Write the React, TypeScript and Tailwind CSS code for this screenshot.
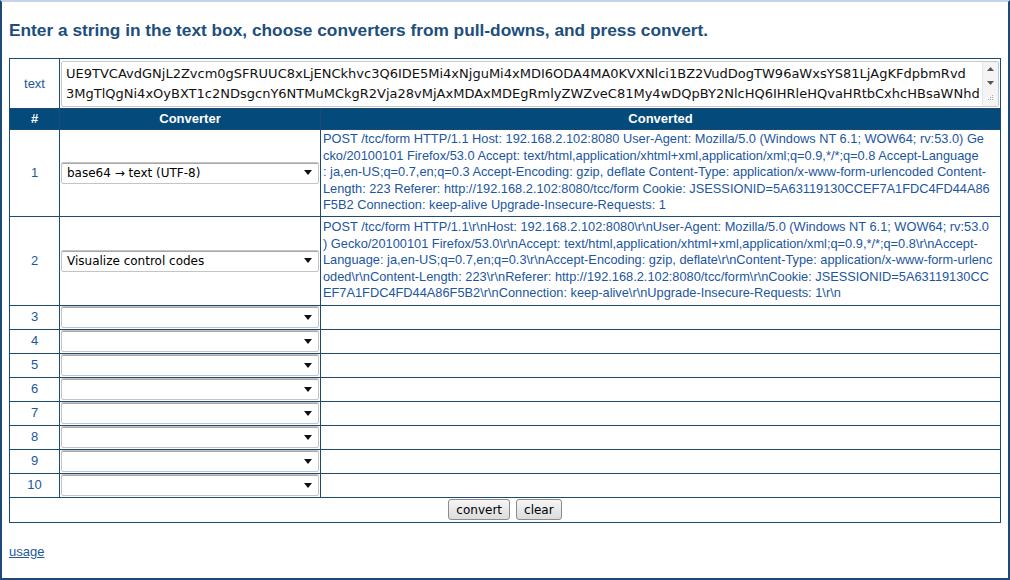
import React from "react";

const row1 = [
  "POST /tcc/form HTTP/1.1 Host: 192.168.2.102:8080 User-Agent: Mozilla/5.0 (Windows NT 6.1; WOW64; rv:53.0) Ge",
  "cko/20100101 Firefox/53.0 Accept: text/html,application/xhtml+xml,application/xml;q=0.9,*/*;q=0.8 Accept-Language",
  ": ja,en-US;q=0.7,en;q=0.3 Accept-Encoding: gzip, deflate Content-Type: application/x-www-form-urlencoded Content-",
  "Length: 223 Referer: http://192.168.2.102:8080/tcc/form Cookie: JSESSIONID=5A63119130CCEF7A1FDC4FD44A86",
  "F5B2 Connection: keep-alive Upgrade-Insecure-Requests: 1",
];

const row2 = [
  "POST /tcc/form HTTP/1.1\\r\\nHost: 192.168.2.102:8080\\r\\nUser-Agent: Mozilla/5.0 (Windows NT 6.1; WOW64; rv:53.0",
  ") Gecko/20100101 Firefox/53.0\\r\\nAccept: text/html,application/xhtml+xml,application/xml;q=0.9,*/*;q=0.8\\r\\nAccept-",
  "Language: ja,en-US;q=0.7,en;q=0.3\\r\\nAccept-Encoding: gzip, deflate\\r\\nContent-Type: application/x-www-form-urlenc",
  "oded\\r\\nContent-Length: 223\\r\\nReferer: http://192.168.2.102:8080/tcc/form\\r\\nCookie: JSESSIONID=5A63119130CC",
  "EF7A1FDC4FD44A86F5B2\\r\\nConnection: keep-alive\\r\\nUpgrade-Insecure-Requests: 1\\r\\n",
];

const Arrow = () => (
  <svg width="8" height="5" viewBox="0 0 8 5" className="shrink-0">
    <path d="M0 0h8L4 5z" fill="#111" />
  </svg>
);

const Select = ({ value }: { value?: string }) => (
  <div className="flex items-center justify-between h-[22px] mx-[1px] px-[5px] pr-[6px] bg-white border border-[#c4c4c4] rounded-[2px] text-[12px] text-black font-['DejaVu_Sans',sans-serif] shadow-[inset_0_1px_0_#a8a8a8]">
    <span className="whitespace-nowrap">{value ?? ""}</span>
    <Arrow />
  </div>
);

const Btn = ({ label }: { label: string }) => (
  <button className="h-[21px] px-[7px] text-[12px] text-black font-['DejaVu_Sans',sans-serif] border border-[#8c8c8c] rounded-[3px] bg-gradient-to-b from-[#f6f6f6] to-[#dcdcdc]">
    {label}
  </button>
);

const Lines = ({ lines }: { lines: string[] }) => (
  <>
    {lines.map((l, i) => (
      <div key={i} className="whitespace-nowrap">
        {l}
      </div>
    ))}
  </>
);

const cell = "border border-[#1b4a72]";

export default function App() {
  const empty = [3, 4, 5, 6, 7, 8, 9, 10];
  return (
    <div className="w-[1010px] h-[580px] bg-white border-2 border-[#1b4a78] border-t-[#c3d3ea] pl-[7px] font-['Liberation_Sans',Arial,sans-serif] overflow-hidden">
      <h1 className="mt-[18px] text-[17.3px] font-bold text-[#1c4e7e] leading-[20px]">
        Enter a string in the text box, choose converters from pull-downs, and press convert.
      </h1>
      <table className="mt-[18px] w-[992px] border-collapse table-fixed">
        <colgroup>
          <col className="w-[50px]" />
          <col className="w-[261px]" />
          <col />
        </colgroup>
        <tbody>
          <tr className="h-[50px]">
            <td className={`${cell} text-center text-[13px] text-[#1c56a0]`}>text</td>
            <td colSpan={2} className={`${cell} p-0`}>
              <div className="flex h-[46px] mx-[1px] my-[1px] border border-[#c8c8c8] rounded-[2px] bg-white">
                <div className="flex-1 px-[4px] pt-[2px] text-[13px] leading-[20px] text-[#111] font-['DejaVu_Sans',sans-serif] overflow-hidden whitespace-nowrap">
                  <div>UE9TVCAvdGNjL2Zvcm0gSFRUUC8xLjENCkhvc3Q6IDE5Mi4xNjguMi4xMDI6ODA4MA0KVXNlci1BZ2VudDogTW96aWxsYS81LjAgKFdpbmRvd</div>
                  <div>3MgTlQgNi4xOyBXT1c2NDsgcnY6NTMuMCkgR2Vja28vMjAxMDAxMDEgRmlyZWZveC81My4wDQpBY2NlcHQ6IHRleHQvaHRtbCxhcHBsaWNhd</div>
                </div>
                <div className="w-[16px] flex flex-col items-center justify-between py-[5px] bg-[#f4f4f4] border-l border-[#e6e6e6]">
                  <svg width="7" height="4" viewBox="0 0 7 4"><path d="M0 4h7L3.5 0z" fill="#555" /></svg>
                  <svg width="7" height="4" viewBox="0 0 7 4"><path d="M0 0h7L3.5 4z" fill="#555" /></svg>
                  <svg width="6" height="6" viewBox="0 0 6 6">
                    <g fill="#aaa">
                      <rect x="4" y="0" width="1" height="1" />
                      <rect x="2" y="2" width="1" height="1" />
                      <rect x="4" y="2" width="1" height="1" />
                      <rect x="0" y="4" width="1" height="1" />
                      <rect x="2" y="4" width="1" height="1" />
                      <rect x="4" y="4" width="1" height="1" />
                    </g>
                  </svg>
                </div>
              </div>
            </td>
          </tr>
          <tr className="h-[18px] bg-[#044a7a] text-white text-[13px] font-bold">
            <th className={cell}>#</th>
            <th className={cell}>Converter</th>
            <th className={cell}>Converted</th>
          </tr>
          <tr className="h-[87px]">
            <td className={`${cell} text-center text-[13px] text-[#1c56a0]`}>1</td>
            <td className={`${cell} p-0`}>
              <Select value="base64 → text (UTF-8)" />
            </td>
            <td className={`${cell} px-[2px] text-[12.8px] leading-[16.5px] text-[#1c56a0]`}>
              <Lines lines={row1} />
            </td>
          </tr>
          <tr className="h-[89px]">
            <td className={`${cell} text-center text-[13px] text-[#1c56a0]`}>2</td>
            <td className={`${cell} p-0`}>
              <Select value="Visualize control codes" />
            </td>
            <td className={`${cell} px-[2px] text-[12.8px] leading-[16.5px] text-[#1c56a0]`}>
              <Lines lines={row2} />
            </td>
          </tr>
          {empty.map((n) => (
            <tr key={n} className="h-[24px]">
              <td className={`${cell} text-center text-[13px] text-[#1c56a0]`}>{n}</td>
              <td className={`${cell} p-0`}>
                <Select />
              </td>
              <td className={cell}></td>
            </tr>
          ))}
          <tr className="h-[25px]">
            <td colSpan={3} className={`${cell} text-center`}>
              <div className="flex justify-center gap-[6px]">
                <Btn label="convert" />
                <Btn label="clear" />
              </div>
            </td>
          </tr>
        </tbody>
      </table>
      <a href="#" className="block mt-[19px] text-[13px] text-[#1a5a9a] underline w-fit">
        usage
      </a>
    </div>
  );
}
